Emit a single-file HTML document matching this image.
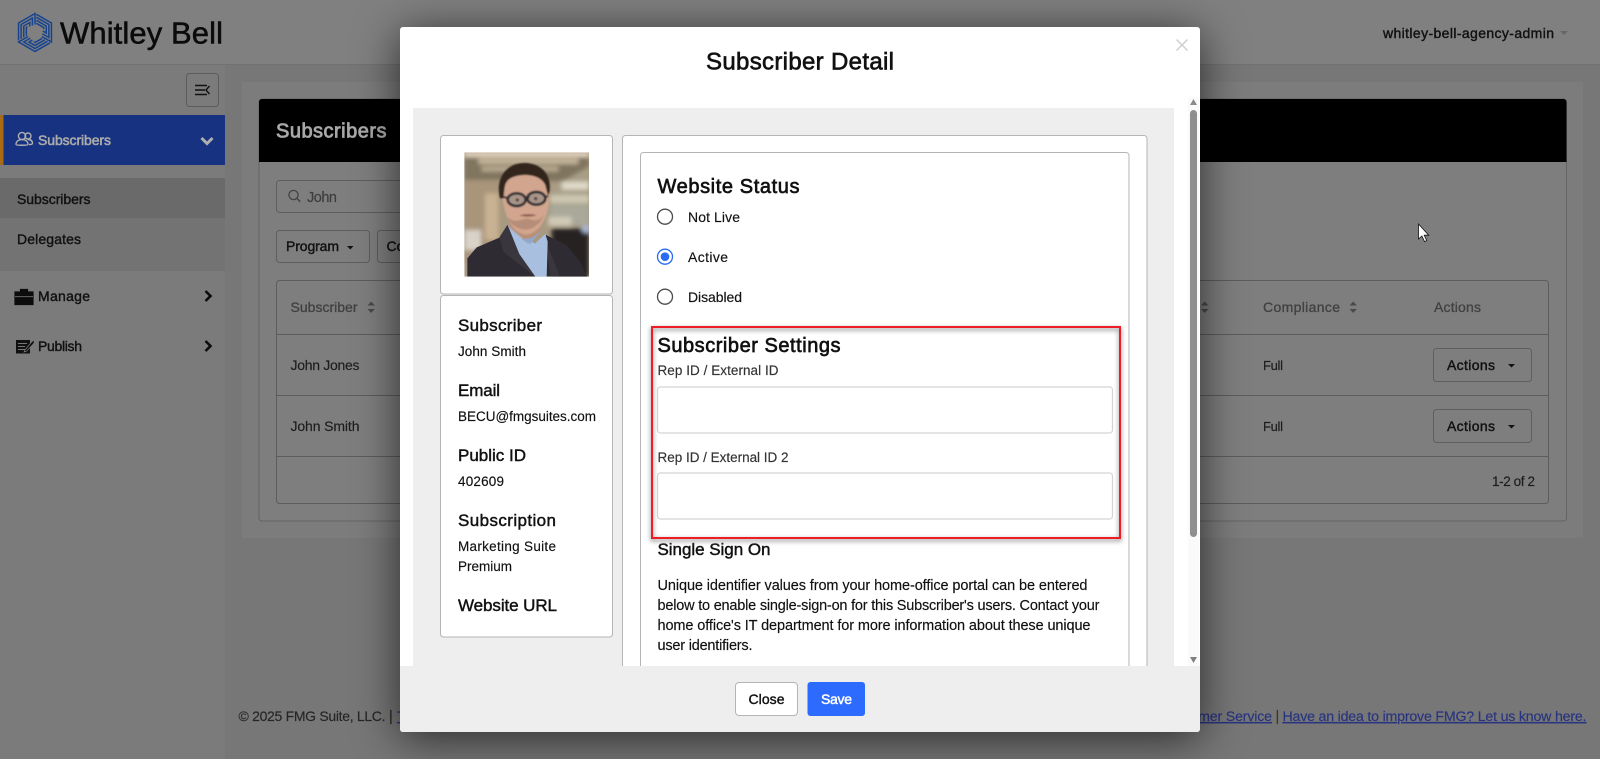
<!DOCTYPE html>
<html lang="en">
<head>
<meta charset="utf-8">
<title>Subscriber Detail</title>
<style>
html,body{margin:0;padding:0;width:1600px;height:759px;overflow:hidden;background:#777}
svg{display:block;position:absolute;left:0;top:0}
text{font-family:"Liberation Sans",sans-serif;font-size:14.5px;color:#111;fill:currentColor;stroke:currentColor;stroke-width:.15;white-space:pre}
.s{font-size:14px}
.m{stroke-width:.4;font-size:14px}
.h{font-size:17px;stroke-width:.45}
.hh{font-size:20px;stroke-width:.65}
.g{color:#3c3c3c}
.d{color:#1d1d1d;font-size:14px}
.gh{color:#404040;stroke-width:.3;font-size:14px}
.lnk{color:#28347f;text-decoration:underline;font-size:14.2px}
.card{fill:#fff;stroke:#b5b5b5;stroke-width:1}
.inp{fill:#fff;stroke:#d4d4d4;stroke-width:1.2}
.btn{fill:none;stroke:#5e5e5e;stroke-width:1}
</style>
</head>
<body>
<svg width="1600" height="759" viewBox="0 0 1600 759" xmlns="http://www.w3.org/2000/svg">
<defs>
<filter id="b6" x="-20%" y="-20%" width="140%" height="140%"><feGaussianBlur stdDeviation="6"/></filter>
<filter id="b2" x="-20%" y="-20%" width="140%" height="140%"><feGaussianBlur stdDeviation="2.500"/></filter>
<clipPath id="ph"><rect x="133" y="67" width="374" height="373"/></clipPath>
<clipPath id="scr"><rect x="413" y="108" width="761" height="558"/></clipPath>
</defs>

<!-- page backdrop -->
<rect width="1600" height="759" fill="#777"/>
<rect width="1600" height="64" fill="#808080"/>
<rect y="64" width="1600" height="1" fill="#717171"/>

<!-- logo -->
<g transform="translate(35,32.500)" fill="none" stroke="#16438f" stroke-width="1.500">
<g><polyline points="1.400,-18.200 16.450,-9.500 16.450,9.500 6.900,4"/><polyline points="1.400,-15.200 13.860,-8 13.860,5 7.400,1.250"/><polyline points="1.400,-12.200 11.260,-6.500 11.260,.5 7.800,-1.500"/><polyline points="1.400,-9.200 8.660,-5 8.660,-3.500"/></g>
<g transform="rotate(120)"><polyline points="1.400,-18.200 16.450,-9.500 16.450,9.500 6.900,4"/><polyline points="1.400,-15.200 13.860,-8 13.860,5 7.400,1.250"/><polyline points="1.400,-12.200 11.260,-6.500 11.260,.5 7.800,-1.500"/><polyline points="1.400,-9.200 8.660,-5 8.660,-3.500"/></g>
<g transform="rotate(240)"><polyline points="1.400,-18.200 16.450,-9.500 16.450,9.500 6.900,4"/><polyline points="1.400,-15.200 13.860,-8 13.860,5 7.400,1.250"/><polyline points="1.400,-12.200 11.260,-6.500 11.260,.5 7.800,-1.500"/><polyline points="1.400,-9.200 8.660,-5 8.660,-3.500"/></g>
</g>
<text x="60" y="43.500" textLength="163" lengthAdjust="spacing" style="font-size:31px;color:#0b0b0b;stroke-width:.55">Whitley Bell</text>
<text x="1383" y="38" textLength="171" lengthAdjust="spacing" class="m">whitley-bell-agency-admin</text>
<path d="M1560 31h8l-4 4z" fill="#666"/>

<!-- sidebar -->
<rect y="65" width="225" height="694" fill="#7b7b7b"/>
<rect x="186.500" y="73.500" width="32" height="33" rx="3" fill="none" stroke="#5c5c5c"/>
<path d="M195 85.500h12M195 90h10M195 94.500h12M209.500 86l-3.500 4 3.500 4" fill="none" stroke="#111" stroke-width="1.400"/>
<rect y="115" width="225" height="50" fill="#163280"/>
<rect y="115" width="3.500" height="50" fill="#a86a12"/>
<g fill="none" stroke="#b0b0b0" stroke-width="1.400">
<circle cx="22" cy="136" r="3.600"/><circle cx="28" cy="136" r="3"/>
<path d="M16 144.500c0-3.500 3-5 6-5s6 1.500 6 5c0 1-12 1-12 0zM28 139.500c3 0 4.500 1.500 4.500 4 0 .8-1.500 1-3.500 1"/>
</g>
<text x="38" y="145" textLength="73" lengthAdjust="spacing" style="color:#ababab;stroke-width:.55;font-size:14px">Subscribers</text>
<path d="M201.500 138l5.500 5.500 5.500-5.500" fill="none" stroke="#b0b0b0" stroke-width="3"/>
<rect y="178" width="225" height="93" fill="#737373"/>
<rect y="178" width="225" height="40" fill="#6a6a6a"/>
<text x="17" y="204" textLength="73.500" lengthAdjust="spacing" class="m">Subscribers</text>
<text x="17" y="244" textLength="64" lengthAdjust="spacing" class="m">Delegates</text>

<path d="M15 292h18v12.500H15zM20.500 292v-2.500h7v2.500" fill="#0c0c0c" stroke="#0c0c0c" stroke-width="1.200"/>
<rect x="15" y="296.300" width="18" height=".8" fill="#7b7b7b"/>
<text x="38" y="301" textLength="52" lengthAdjust="spacing" class="m">Manage</text>
<path d="M205.500 291l5 5-5 5" fill="none" stroke="#0c0c0c" stroke-width="2.600"/>
<path d="M16 340h14v13.500H16z" fill="#111"/>
<path d="M18 343.500h9M18 346.500h7M18 349.500h7" stroke="#777" stroke-width="1"/>
<path d="M25 350l6.500-8 1.800-1.500 1.200 1.200-1 2-7 7.500-2.500.8z" fill="#111" stroke="#7b7b7b" stroke-width=".7"/>
<text x="38" y="351" textLength="44" lengthAdjust="spacing" class="m">Publish</text>
<path d="M205.500 341l5 5-5 5" fill="none" stroke="#0c0c0c" stroke-width="2.600"/>

<!-- main card -->
<rect x="242" y="82" width="1341" height="456" fill="#7c7c7c"/>
<rect x="259" y="99" width="1307.500" height="422" rx="3" fill="#7e7e7e" stroke="#646464"/>
<path d="M259 162V102a3 3 0 0 1 3-3h1301.500a3 3 0 0 1 3 3v60z" fill="#000"/>
<text x="276" y="137.500" textLength="110.500" lengthAdjust="spacing" style="font-size:20px;color:#a8a8a8;stroke-width:.8">Subscribers</text>
<rect x="276.500" y="180.500" width="420" height="32" rx="3" class="btn"/>
<circle cx="293.500" cy="195" r="4.600" fill="none" stroke="#444" stroke-width="1.300"/>
<path d="M297 198.500l3.200 3.200" stroke="#444" stroke-width="1.500"/>
<text x="307" y="202" textLength="30" lengthAdjust="spacing" class="g">John</text>
<rect x="276.500" y="230.500" width="93" height="32" rx="3" class="btn"/>
<text x="286" y="251" textLength="53" lengthAdjust="spacing" class="m">Program</text>
<path d="M347 246h6.500l-3.250 3.500z" fill="#111"/>
<rect x="377.500" y="230.500" width="60" height="32" rx="3" class="btn"/>
<text x="386.500" y="251" class="m">Co</text>

<rect x="276.500" y="280.500" width="1272" height="223" rx="3" fill="none" stroke="#5c5c5c"/>
<path d="M277 334.500h1271M277 395.500h1271M277 456.500h1271" stroke="#5c5c5c"/>
<text x="290.500" y="312" textLength="67" lengthAdjust="spacing" class="gh">Subscriber</text>
<path d="M367.500 305.500l3.700-4 3.700 4zM367.500 309l3.700 4 3.700-4z" fill="#4a4a4a"/>
<text x="1263" y="312" textLength="77" lengthAdjust="spacing" class="gh">Compliance</text>
<path d="M1349.500 305.500l3.700-4 3.700 4zM1349.500 309l3.700 4 3.700-4z" fill="#4a4a4a"/>
<path d="M1201 305.500l3.700-4 3.700 4zM1201 309l3.700 4 3.700-4z" fill="#4a4a4a"/>
<text x="1434" y="312" textLength="47" lengthAdjust="spacing" class="gh">Actions</text>
<text x="290.500" y="370" textLength="69" lengthAdjust="spacing" class="d">John Jones</text>
<text x="290.500" y="431" textLength="69" lengthAdjust="spacing" class="d">John Smith</text>
<text x="1263" y="370" textLength="20" lengthAdjust="spacing" class="d" style="font-size:13px">Full</text>
<text x="1263" y="431" textLength="20" lengthAdjust="spacing" class="d" style="font-size:13px">Full</text>
<rect x="1433.500" y="348.500" width="98" height="33" rx="3" class="btn"/>
<rect x="1433.500" y="409.500" width="98" height="33" rx="3" class="btn"/>
<text x="1447" y="370" textLength="48" lengthAdjust="spacing" class="m">Actions</text>
<text x="1447" y="431" textLength="48" lengthAdjust="spacing" class="m">Actions</text>
<path d="M1508 364h7l-3.500 3.500zM1508 425h7l-3.500 3.500z" fill="#111"/>
<text x="1492" y="486" textLength="43" lengthAdjust="spacing" class="d" style="font-size:13.500px">1-2 of 2</text>

<!-- footer -->
<text x="238.500" y="721" textLength="147" lengthAdjust="spacing" class="g" style="color:#262626;font-size:14px">© 2025 FMG Suite, LLC.</text>
<text x="389" y="721" style="color:#262626">|</text>
<text x="397" y="721" class="lnk">Terms</text>
<text x="1162" y="721" textLength="110" lengthAdjust="spacing" class="lnk">Customer Service</text>
<text x="1275.500" y="721" style="color:#3a3a22">|</text>
<text x="1282.500" y="721" textLength="304" lengthAdjust="spacing" class="lnk">Have an idea to improve FMG? Let us know here.</text>

<!-- cursor -->
<path d="M1418.500 224v15l3.400-3 2.600 5.600 2.200-1-2.500-5.400h4.500z" fill="#fff" stroke="#111" stroke-width=".8"/>

<!-- modal -->
<rect x="400" y="27" width="800" height="705" rx="3" fill="#fff" style="filter:drop-shadow(0 6px 22px rgba(0,0,0,.65))"/>
<text x="706" y="69.500" textLength="188" lengthAdjust="spacing" style="font-size:24px;stroke-width:.65">Subscriber Detail</text>
<path d="M1176.500 39.500l11 11M1187.500 39.500l-11 11" stroke="#cfcfcf" stroke-width="1.500"/>

<rect x="413" y="108" width="761" height="558" fill="#eee"/>
<g clip-path="url(#scr)">
<rect x="622.500" y="135.500" width="524.500" height="600" rx="3" class="card"/>
<rect x="640.500" y="152.500" width="488.500" height="600" rx="3" class="card"/>
<rect x="440.500" y="135.500" width="172" height="158.500" rx="3" class="card"/>
<rect x="440.500" y="295.500" width="172" height="341.500" rx="3" class="card"/>

<!-- photo -->
<g transform="translate(420,130) scale(.33333)" clip-path="url(#ph)">
<rect x="133" y="67" width="374" height="373" fill="#a89a82"/>
<g filter="url(#b6)">
<rect x="133" y="67" width="374" height="14" fill="#e6d8c2"/>
<rect x="133" y="81" width="374" height="72" fill="#80745f"/>
<rect x="175" y="86" width="300" height="16" fill="#c6b89e"/>
<rect x="185" y="110" width="230" height="14" fill="#bcae94"/>
<path d="M400 170L507 110V230H400z" fill="#a89f86"/>
<rect x="425" y="155" width="82" height="24" fill="#ded9c8"/>
<rect x="390" y="195" width="117" height="24" fill="#cdc7b3"/>
<rect x="133" y="150" width="110" height="250" fill="#a9957a"/>
<rect x="133" y="300" width="50" height="60" fill="#d9d2c8"/>
<rect x="195" y="190" width="40" height="140" fill="#c9b193"/>
<rect x="390" y="225" width="117" height="60" fill="#a9a99a"/>
<rect x="385" y="260" width="70" height="28" fill="#d0c9b6"/>
<rect x="395" y="295" width="112" height="145" fill="#262423"/>
<circle cx="497" cy="297" r="12" fill="#a9b9d6"/>
</g>
<path d="M142 440V385L170 352L240 322L262 285L345 340L378 315L440 345L480 395L502 440Z" fill="#2f2b33"/>
<path d="M262 285L238 322L250 365L345 440L300 370Z" fill="#3a363e"/>
<path d="M378 315L382 345L420 440H392L382 370Z" fill="#3a363e"/>
<path d="M263 285L298 372L346 440H380L383 335L376 312L345 340Z" fill="#a9bfe0"/>
<g filter="url(#b2)">
<path d="M268 245V292L325 340L362 300V245Z" fill="#b98f78"/>
<path d="M245 180C245 125 285 112 320 115C365 118 390 150 388 205C385 265 355 312 318 314C280 312 250 260 245 180Z" fill="#d2a58e"/>
<path d="M262 262C285 310 350 315 372 252C355 282 338 268 322 266C305 268 285 282 262 262Z" fill="#8a6a58" opacity=".4"/>
<path d="M298 256C315 251 335 251 350 256C335 261 312 261 298 256Z" fill="#8f5f52"/>
<path d="M240 205C230 165 240 125 280 105C320 90 375 102 387 150C392 170 390 185 384 198L376 165C365 140 330 132 300 136C272 140 258 150 254 172L250 205Z" fill="#33261f"/>
<ellipse cx="290" cy="209" rx="27" ry="19" fill="#a99488" stroke="#2d2e31" stroke-width="8"/>
<ellipse cx="349" cy="205" rx="27" ry="19" fill="#a99488" stroke="#2d2e31" stroke-width="8"/>
<circle cx="292" cy="210" r="5" fill="#4c4640"/>
<circle cx="347" cy="206" r="5" fill="#4c4640"/>
<path d="M318 205c4-4 7-4 10-2M262 204l-14-4M376 202l8-4" fill="none" stroke="#2d2e31" stroke-width="6"/>
</g>
<path d="M305 328l26 14 28-36-24 18z" fill="#8fa8cc"/>
</g>

<!-- left info -->
<text x="458" y="331" textLength="84" lengthAdjust="spacing" class="h">Subscriber</text>
<text x="458" y="356" textLength="68" lengthAdjust="spacing" style="font-size:13.500px">John Smith</text>
<text x="458" y="396" textLength="42" lengthAdjust="spacing" class="h">Email</text>
<text x="458" y="421" textLength="138" lengthAdjust="spacing" style="font-size:13.500px">BECU@fmgsuites.com</text>
<text x="458" y="461" textLength="68" lengthAdjust="spacing" class="h">Public ID</text>
<text x="458" y="486" textLength="46" lengthAdjust="spacing" style="font-size:13.500px">402609</text>
<text x="458" y="526" textLength="98" lengthAdjust="spacing" class="h">Subscription</text>
<text x="458" y="551" textLength="98" lengthAdjust="spacing" style="font-size:13.500px">Marketing Suite</text>
<text x="458" y="571" textLength="54" lengthAdjust="spacing" style="font-size:13.500px">Premium</text>
<text x="458" y="611" textLength="99" lengthAdjust="spacing" class="h">Website URL</text>

<!-- right content -->
<text x="657.500" y="193" textLength="142" lengthAdjust="spacing" class="hh">Website Status</text>
<circle cx="665" cy="216.700" r="7.500" fill="#fff" stroke="#4c4c4c" stroke-width="1.300"/>
<text x="688" y="222" textLength="52" lengthAdjust="spacing" class="s">Not Live</text>
<circle cx="665" cy="256.700" r="7.500" fill="#fff" stroke="#2a6bf5" stroke-width="1.300"/>
<circle cx="665" cy="256.700" r="4.300" fill="#2a6bf5"/>
<text x="688" y="262" textLength="40" lengthAdjust="spacing" class="s">Active</text>
<circle cx="665" cy="296.700" r="7.500" fill="#fff" stroke="#4c4c4c" stroke-width="1.300"/>
<text x="688" y="302" textLength="54" lengthAdjust="spacing" class="s">Disabled</text>

<text x="657.500" y="352" textLength="183" lengthAdjust="spacing" class="hh">Subscriber Settings</text>
<text x="657.500" y="375" textLength="121" lengthAdjust="spacing" style="color:#333;font-size:13.500px">Rep ID / External ID</text>
<rect x="657.500" y="387" width="455" height="46" rx="3" class="inp"/>
<text x="657.500" y="462" textLength="131" lengthAdjust="spacing" style="color:#333;font-size:13.500px">Rep ID / External ID 2</text>
<rect x="657.500" y="473" width="455" height="46" rx="3" class="inp"/>

<text x="657.500" y="555" textLength="113" lengthAdjust="spacing" class="h">Single Sign On</text>
<text x="657.500" y="590" textLength="430" lengthAdjust="spacing">Unique identifier values from your home-office portal can be entered</text>
<text x="657.500" y="610" textLength="442" lengthAdjust="spacing">below to enable single-sign-on for this Subscriber's users. Contact your</text>
<text x="657.500" y="630" textLength="433" lengthAdjust="spacing">home office's IT department for more information about these unique</text>
<text x="657.500" y="650" textLength="95" lengthAdjust="spacing">user identifiers.</text>

<!-- highlight -->
<rect x="652" y="329" width="468" height="211" fill="none" stroke="#8a8a8a" stroke-width="2.500" style="filter:blur(2.500px)"/>
<rect x="652" y="327" width="468" height="211" fill="none" stroke="#ee1c25" stroke-width="2"/>
</g>

<!-- scrollbar -->
<rect x="1188" y="97" width="11" height="569" fill="#fafafa"/>
<path d="M1190 105l3.500-6 3.500 6z" fill="#8a8a8a"/>
<rect x="1190" y="110" width="7" height="427" rx="3.500" fill="#8f8f8f"/>
<path d="M1190 657l3.500 6 3.500-6z" fill="#7f7f7f"/>

<!-- modal footer -->
<path d="M400 666h800v63a3 3 0 0 1-3 3H403a3 3 0 0 1-3-3z" fill="#eee"/>
<rect x="735.500" y="682.500" width="62" height="33" rx="3.500" fill="#fff" stroke="#b5b5b5"/>
<text x="748.500" y="704" textLength="36" lengthAdjust="spacing" class="m">Close</text>
<rect x="807.500" y="682" width="57.500" height="34" rx="3" fill="#2d6bff"/>
<text x="821" y="704" textLength="31" lengthAdjust="spacing" style="color:#fff;stroke-width:.45;font-size:14px">Save</text>
</svg>
</body>
</html>
